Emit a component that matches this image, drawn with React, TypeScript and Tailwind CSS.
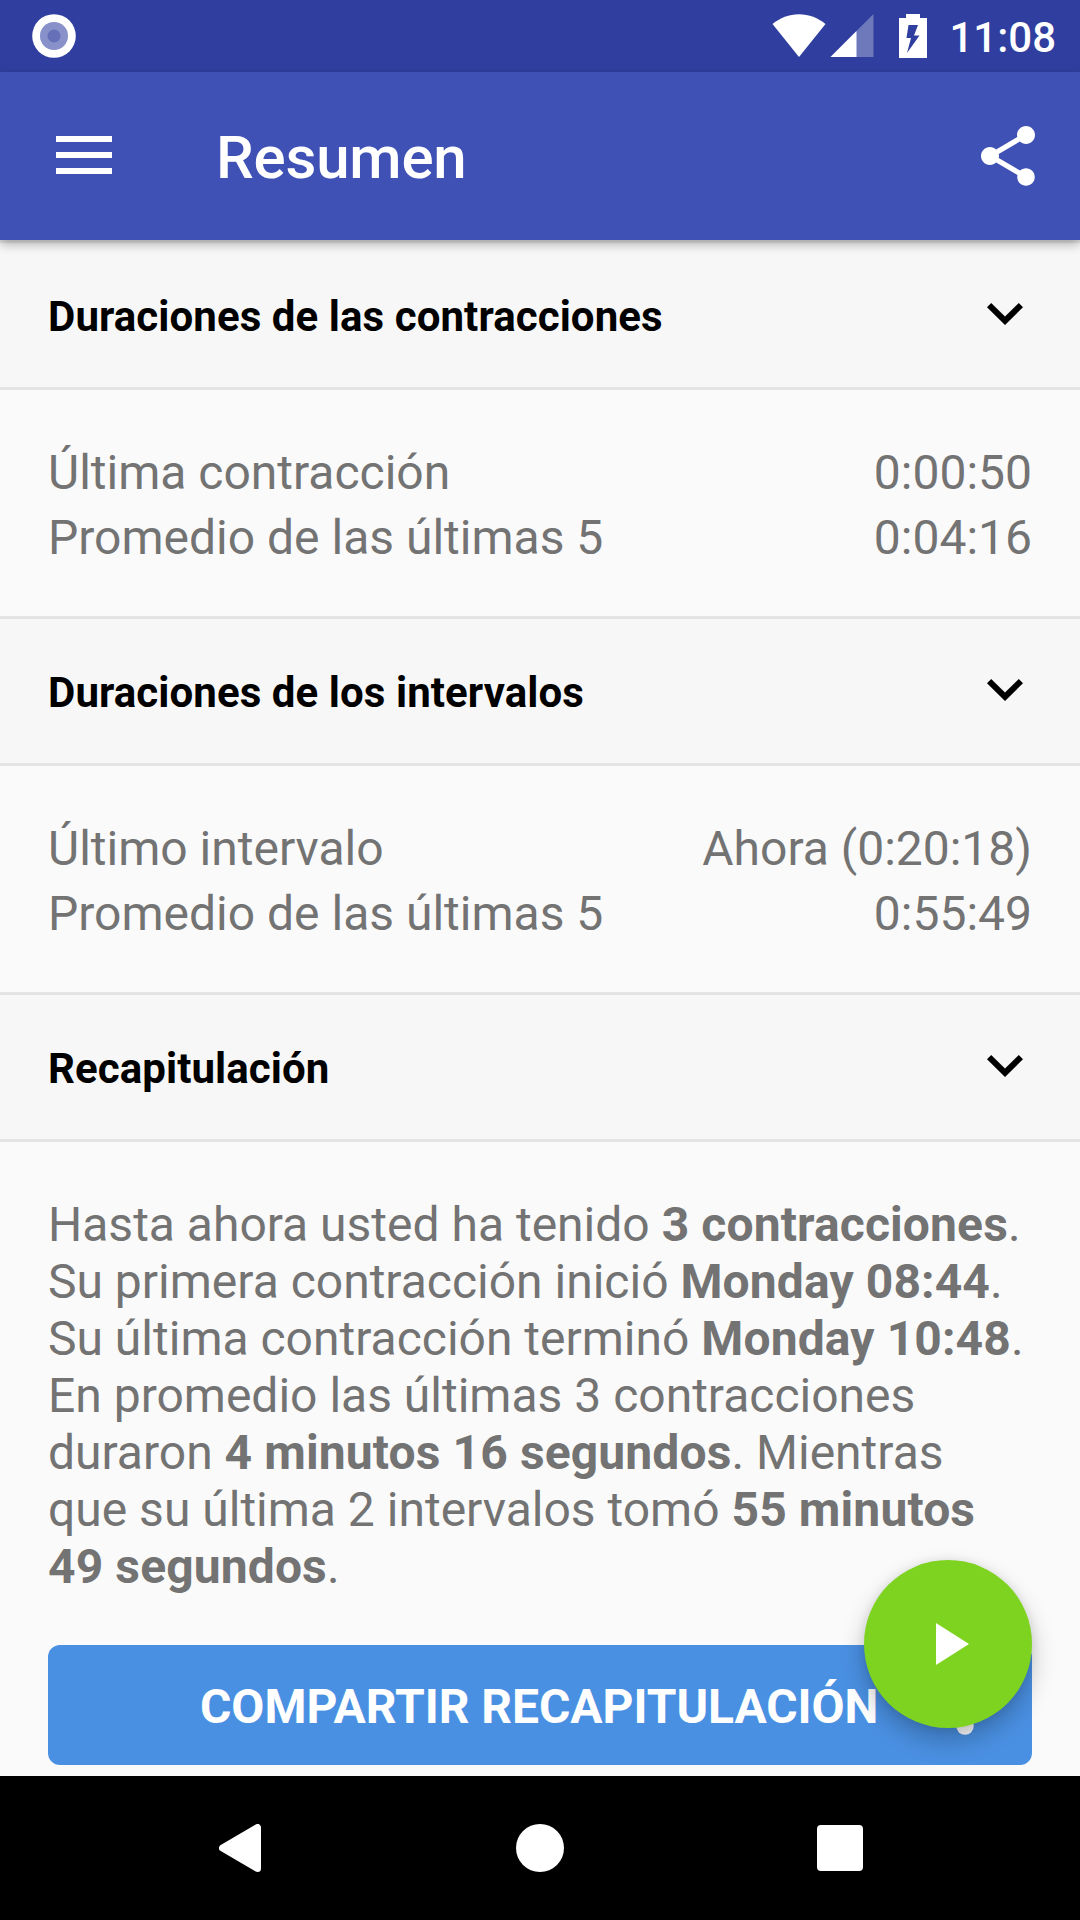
import type { ReactNode } from "react";

const DURATIONS = [
  { label: "Última contracción", value: "0:00:50" },
  { label: "Promedio de las últimas 5", value: "0:04:16" },
];

const INTERVALS = [
  { label: "Último intervalo", value: "Ahora (0:20:18)" },
  { label: "Promedio de las últimas 5", value: "0:55:49" },
];

function StatusBar() {
  return (
    <div className="h-[72px] shrink-0 bg-[#303f9f] flex items-center justify-between pl-8 pr-6">
      <svg width="44" height="44" viewBox="0 0 44 44">
        <circle cx="22" cy="22" r="21.8" fill="#fff" />
        <circle cx="22" cy="22" r="14" fill="#8891c9" />
        <circle cx="22" cy="22" r="6.5" fill="#6670b8" />
      </svg>
      <div className="flex items-center">
        {/* Wifi */}
        <svg width="54" height="44" viewBox="0 0 54 44">
          <path d="M0.5 10C8 4 17 0.3 27 0.3S46 4 53.5 10L27 43z" fill="#fff" />
        </svg>
        {/* Signal */}
        <svg width="44" height="44" viewBox="0 0 44 44" className="ml-1">
          <path d="M0.5 43L43.5 0V43z" fill="#fff" opacity="0.3" />
          <path d="M0.5 43L26.5 17V43z" fill="#fff" />
        </svg>
        {/* Battery, charging */}
        <svg width="28" height="44" viewBox="0 0 28 44" className="ml-[25px]">
          <path
            fillRule="evenodd"
            d="M7 0H21V4H28V44H0V4H7zM9.500 11L7.500 24H12L8 39L20.500 21.500H15L19 11z"
            fill="#fff"
          />
        </svg>
        <span className="ml-[22px] mt-[3px] text-[42px] leading-[50px] font-medium text-white">11:08</span>
      </div>
    </div>
  );
}

function Toolbar() {
  return (
    <header className="relative z-10 h-[168px] shrink-0 bg-[#3f51b5] flex items-center pl-14 pr-9 shadow-[0_4px_10px_rgba(0,0,0,0.3)]">
      <svg width="56" height="38" viewBox="0 0 56 38" className="-mt-0.5">
        <path d="M0 0H56V6H0zM0 16H56V22H0zM0 32H56V38H0z" fill="#fff" />
      </svg>
      <h1 className="ml-[104px] mt-1 flex-1 text-[60px] leading-[70px] font-medium tracking-[-0.2px] text-white">
        Resumen
      </h1>
      <svg width="72" height="72" viewBox="0 0 24 24" fill="#fff">
        <path d="M18 16.080c-.76 0-1.440.3-1.960.77L8.910 12.700c.05-.23.09-.46.09-.7s-.04-.47-.09-.7l7.050-4.110c.54.5 1.250.81 2.040.81 1.660 0 3-1.340 3-3s-1.340-3-3-3-3 1.340-3 3c0 .24.040.47.090.7L8.040 9.810C7.500 9.310 6.790 9 6 9c-1.660 0-3 1.340-3 3s1.340 3 3 3c.79 0 1.500-.31 2.040-.81l7.120 4.160c-.05.21-.08.43-.08.65 0 1.610 1.310 2.920 2.920 2.920 1.610 0 2.920-1.310 2.920-2.920s-1.310-2.920-2.920-2.920z" />
      </svg>
    </header>
  );
}

function SectionHeader({ title }: { title: string }) {
  return (
    <div className="h-[150px] shrink-0 bg-[#f7f7f7] border-y-[3px] border-[#e4e4e4] flex items-center justify-between pl-12 pr-[57px]">
      <h2 className="mt-[3px] text-[42px] leading-[50px] font-bold tracking-[0.08px] text-black">{title}</h2>
      <svg width="36" height="22" viewBox="0 0 36 22" className="-mt-0.5">
        <path d="M4.200 0L18 13.600L31.800 0L36 4.200L18 22L0 4.200z" fill="#000" />
      </svg>
    </div>
  );
}

function Rows({ rows }: { rows: { label: string; value: string }[] }) {
  return (
    <div className="h-[226px] shrink-0 px-12 pt-[50px]">
      {rows.map((row) => (
        <div key={row.label} className="flex justify-between text-[48px] leading-[65px]">
          <span>{row.label}</span>
          <span>{row.value}</span>
        </div>
      ))}
    </div>
  );
}

function Strong({ children }: { children: ReactNode }) {
  return <b className="font-bold tracking-[0.12px]">{children}</b>;
}

function NavBar() {
  return (
    <nav className="h-[144px] shrink-0 bg-black flex items-center pl-[219px]">
      <svg width="42" height="48" viewBox="0 0 42 48">
        <path d="M3.500 24L38.500 3.500V44.500z" fill="#fff" stroke="#fff" strokeWidth="7" strokeLinejoin="round" />
      </svg>
      <div className="ml-[255px] size-12 rounded-full bg-white" />
      <div className="ml-[253px] size-[46px] rounded-[4px] bg-white" />
    </nav>
  );
}

export default function App() {
  return (
    <div className="w-[1080px] h-[1920px] overflow-hidden flex flex-col bg-[#fafafa] text-[#737373] font-[Roboto,sans-serif]">
      <StatusBar />
      <Toolbar />
      <main className="relative flex-1 min-h-0 overflow-hidden flex flex-col">
        <SectionHeader title="Duraciones de las contracciones" />
        <Rows rows={DURATIONS} />
        <SectionHeader title="Duraciones de los intervalos" />
        <Rows rows={INTERVALS} />
        <SectionHeader title="Recapitulación" />

        <p className="px-12 pt-[54px] text-[48px] leading-[57px] whitespace-nowrap">
          Hasta ahora usted ha tenido <Strong>3 contracciones</Strong>.<br />
          Su primera contracción inició <Strong>Monday 08:44</Strong>.<br />
          Su última contracción terminó <Strong>Monday 10:48</Strong>.<br />
          En promedio las últimas 3 contracciones
          <br />
          duraron <Strong>4 minutos 16 segundos</Strong>. Mientras
          <br />
          que su última 2 intervalos tomó <Strong>55 minutos</Strong>
          <br />
          <Strong>49 segundos</Strong>.
        </p>

        <button className="mx-12 mt-auto mb-[11px] h-[120px] shrink-0 rounded-xl bg-[#4a90e2] flex items-center pl-[152px] text-[48px] font-bold text-white">
          <span className="mt-1 tracking-[-0.04px]">COMPARTIR RECAPITULACIÓN</span>
          {/* Share icon, mostly hidden by the play button */}
          <svg width="72" height="72" viewBox="0 0 24 24" className="ml-[33px]" fill="#fff">
            <circle cx="18" cy="19" r="2.920" />
            <circle cx="18" cy="5" r="3" />
            <circle cx="6" cy="12" r="3" />
            <path d="M18 5L6 12l12 7" fill="none" stroke="#fff" strokeWidth="1.600" />
          </svg>
        </button>

        <button className="absolute right-12 bottom-12 size-[168px] rounded-full bg-[#7ed321] flex items-center justify-center shadow-[0_12px_24px_rgba(0,0,0,0.24),0_0_10px_rgba(0,0,0,0.08)]">
          <svg width="33" height="42" viewBox="0 0 33 42" className="ml-[9px]">
            <path d="M0 0V42L33 21z" fill="#fff" />
          </svg>
        </button>
      </main>
      <NavBar />
    </div>
  );
}
